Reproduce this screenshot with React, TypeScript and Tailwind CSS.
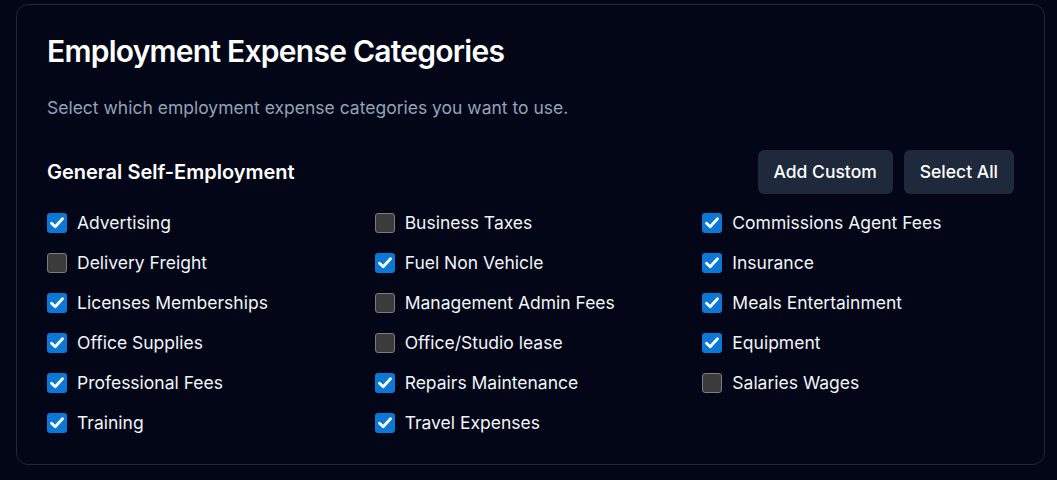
import { useState } from "react";

const categories = [
  { name: "Advertising", on: true },
  { name: "Business Taxes", on: false },
  { name: "Commissions Agent Fees", on: true },
  { name: "Delivery Freight", on: false },
  { name: "Fuel Non Vehicle", on: true },
  { name: "Insurance", on: true },
  { name: "Licenses Memberships", on: true },
  { name: "Management Admin Fees", on: false },
  { name: "Meals Entertainment", on: true },
  { name: "Office Supplies", on: true },
  { name: "Office/Studio lease", on: false },
  { name: "Equipment", on: true },
  { name: "Professional Fees", on: true },
  { name: "Repairs Maintenance", on: true },
  { name: "Salaries Wages", on: false },
  { name: "Training", on: true },
  { name: "Travel Expenses", on: true },
];

const CheckBox = ({ checked }: { checked: boolean }) =>
  checked ? (
    <span className="flex h-5 w-5 shrink-0 items-center justify-center rounded-[3px] bg-[#0b78d6]">
      <svg viewBox="0 0 20 20" className="h-5 w-5" fill="none">
        <path d="M4.5 10.2 8.2 13.8 15.5 5.8" stroke="#fff" strokeWidth="2.8" strokeLinecap="round" strokeLinejoin="round" />
      </svg>
    </span>
  ) : (
    <span className="h-5 w-5 shrink-0 rounded-[3px] border border-[#7c7c7c] bg-[#3b3b3b]" />
  );

export default function App() {
  const [items, setItems] = useState(categories);

  const toggle = (i: number) =>
    setItems((prev) => prev.map((c, j) => (j === i ? { ...c, on: !c.on } : c)));

  return (
    <div className="min-h-screen bg-[#020617] pt-1 pb-4 pl-4 pr-3 font-['Inter',sans-serif]">
      <div className="rounded-xl border border-[#1e293b] bg-[#020617] px-[30px] pt-7 pb-[29px]">
        <h1 className="text-3xl font-semibold leading-9 tracking-tight text-white">
          Employment Expense Categories
        </h1>
        <p className="mt-[27px] text-[17.5px] leading-6 text-[#94a3b8]">
          Select which employment expense categories you want to use.
        </p>

        <div className="mt-[30px] flex items-center justify-between">
          <h2 className="text-xl font-semibold text-white">General Self-Employment</h2>
          <div className="flex gap-[11px]">
            <button className="h-11 rounded-md bg-[#1e293b] px-4 text-[17.5px] font-medium text-white">
              Add Custom
            </button>
            <button className="h-11 rounded-md bg-[#1e293b] px-4 text-[17.5px] font-medium text-white">
              Select All
            </button>
          </div>
        </div>

        <div className="mt-[17px] grid grid-cols-3 gap-4">
          {items.map((c, i) => (
            <label
              key={c.name}
              onClick={() => toggle(i)}
              className="flex h-6 cursor-pointer items-center gap-[10px] text-[17.5px] text-[#f1f5f9]"
            >
              <CheckBox checked={c.on} />
              <span>{c.name}</span>
            </label>
          ))}
        </div>
      </div>
    </div>
  );
}
